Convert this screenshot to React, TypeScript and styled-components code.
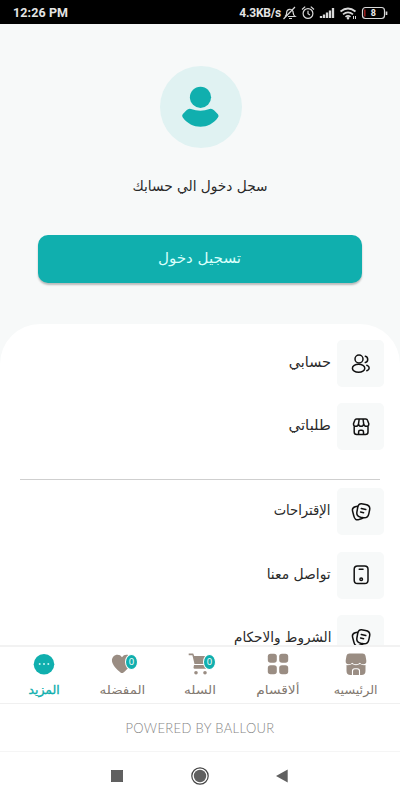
import React from "react";
import styled, { createGlobalStyle } from "styled-components";

const TEAL = "#10afae";
const TAUPE = "#9a8d83";

const GlobalStyle = createGlobalStyle`
  * { box-sizing: border-box; }
  body { margin: 0; background: #fff; }
`;

const Screen = styled.div`
  width: 400px;
  height: 800px;
  display: flex;
  flex-direction: column;
  overflow: hidden;
  background: #f7f9f9;
  font-family: "DejaVu Sans", "Noto Sans", sans-serif;
`;

const StatusBar = styled.header`
  flex: none;
  height: 24px;
  padding: 1px 12px 0 13px;
  display: flex;
  align-items: center;
  justify-content: space-between;
  background: #000;
  color: #e4e4e4;
  font: 700 12.5px/24px Roboto, sans-serif;
  letter-spacing: 0.1px;
`;

const StatusGroup = styled.div`
  display: flex;
  align-items: center;
  height: 24px;
`;

const Speed = styled.span`
  font-size: 12px;
  letter-spacing: -0.2px;
  margin-right: 1px;
`;

const StatusIcons = styled.svg`
  display: block;
  width: 106px;
  height: 16px;
`;

const Hero = styled.section`
  flex: none;
  height: 300px;
  padding: 42px 38px 0;
  display: flex;
  flex-direction: column;
  align-items: center;
`;

const Avatar = styled.div`
  width: 82px;
  height: 82px;
  margin-left: 1px;
  border-radius: 50%;
  background: #e0f2f2;
  display: flex;
  align-items: center;
  justify-content: center;
`;

const Label = styled.span<{ $size: number; $scale?: number; $origin?: string; $color?: string; $strong?: boolean }>`
  display: block;
  white-space: nowrap;
  direction: rtl;
  font-size: ${(p) => p.$size}px;
  line-height: 20px;
  color: ${(p) => p.$color ?? "#2a2a2a"};
  -webkit-text-stroke: ${(p) => (p.$strong ? "0.35px currentColor" : "0")};
  transform: scaleX(${(p) => p.$scale ?? 1});
  transform-origin: ${(p) => p.$origin ?? "center"};
`;

const Prompt = styled.div`
  margin-top: 28px;
  height: 20px;
`;

const LoginButton = styled.button`
  width: 324px;
  height: 48px;
  margin-top: 39px;
  padding: 0 2px 3px 0;
  border: 0;
  border-radius: 10px;
  background: ${TEAL};
  box-shadow: 0 2px 2px rgba(0, 0, 0, 0.25);
  display: flex;
  align-items: center;
  justify-content: center;
  font-family: inherit;
`;

const Sheet = styled.main`
  flex: 1;
  min-height: 0;
  overflow: hidden;
  padding: 16px 16px 0 20px;
  border-radius: 40px 40px 0 0;
  background: #fff;
`;

const MenuGroup = styled.div`
  display: flex;
  flex-direction: column;
  gap: 16.3px;
`;

const MenuRow = styled.div`
  direction: rtl;
  display: flex;
  align-items: center;
  gap: 6px;
  height: 47px;
`;

const MenuText = styled.div`
  padding-bottom: 3px;
`;

const Tile = styled.div`
  flex: none;
  width: 47px;
  height: 47px;
  border-radius: 5px;
  background: #f7f9f9;
  display: flex;
  align-items: center;
  justify-content: center;
`;

const Divider = styled.hr`
  width: 360px;
  height: 1px;
  margin: 28.7px 0 8.3px;
  border: 0;
  background: #cfcfcf;
`;

const TabBar = styled.nav`
  flex: none;
  height: 59px;
  padding: 0 5px;
  border-top: 2px solid #f2f2f2;
  border-bottom: 1px solid #f0f0f0;
  background: #fff;
  display: grid;
  grid-template-columns: repeat(5, 78px);
`;

const Tab = styled.div`
  display: flex;
  flex-direction: column;
  align-items: center;
  padding-top: 4px;
`;

const TabIcon = styled.div`
  position: relative;
  height: 26px;
  display: flex;
  align-items: center;
`;

const Badge = styled.span<{ $left: number }>`
  position: absolute;
  top: 3px;
  left: ${(p) => p.$left}px;
  width: 13px;
  height: 16px;
  border: 1px solid #fff;
  border-radius: 50%;
  background: ${TEAL};
  color: #fff;
  font: 9.5px/14px "Open Sans", sans-serif;
  text-align: center;
`;

const TabText = styled.div`
  height: 20px;
  margin-top: 3px;
`;

const Powered = styled.footer`
  flex: none;
  height: 48px;
  border-bottom: 1px solid #f5f5f5;
  background: #fff;
  color: #858585;
  text-align: center;
  font: 300 13px/48px Lato, sans-serif;
  letter-spacing: 0.35px;
`;

const SystemNav = styled.div`
  flex: none;
  height: 48px;
  background: #fff;
  display: flex;
  align-items: center;
  justify-content: space-between;
  padding: 0 112px 0 111px;
`;

const Line = styled.svg`
  display: block;
  fill: none;
  stroke: #111;
  stroke-width: 1.5;
  stroke-linecap: round;
  stroke-linejoin: round;
`;

const Solid = styled.svg<{ $fill?: string }>`
  display: block;
  fill: ${(p) => p.$fill ?? TAUPE};
`;

const PeopleIcon = () => (
  <Line width="20" height="20" viewBox="0 0 20 20">
    <circle cx="8" cy="5" r="4" />
    <ellipse cx="7.6" cy="14.300" rx="6.200" ry="4" />
    <path d="M14.300 2.300a3.200 3.200 0 0 1 0 6.200M15.800 11.300c3.200 1.200 3.200 4.200 0 5.500" />
  </Line>
);

const StoreIcon = () => (
  <Line width="20" height="20" viewBox="0 0 20 20">
    <path d="M3.200 9.400v5.600q0 2.500 2.500 2.500h8.800q2.500 0 2.500-2.500V9.400M5.500 2h9.300q1.300 0 1.700 1.200l1.300 3.500q.1 2.600-2.300 2.600t-2.800-2.500q-.3 2.500-2.600 2.500T7.500 6.800Q7.200 9.300 4.800 9.300T2.500 6.700l1.300-3.500Q4.200 2 5.500 2ZM8.200 2l-.7 4.800M12 2l.7 4.800M7.600 17.500v-2.500q0-1.700 1.700-1.700h1.500q1.700 0 1.700 1.700v2.500" />
  </Line>
);

const NotesIcon = () => (
  <Line width="20" height="20" viewBox="0 0 20 20">
    <path d="M10.500 1.700l4 .7C18 3 19.200 4.500 18.700 7.500l-.9 4.300c-.7 3.300-2.300 4.200-5.300 3.900l-2.800-.5C6.500 14.500 5.400 12.800 5.900 10l.8-4.500C7.300 2.500 8.200 1.500 10.500 1.700Z" />
    <path d="M6.500 4.200l-2.300.6C1.800 5.500 1 6.800 1.600 9.200l1.300 5c.7 3 2.300 4.100 5 3.300l2.400-.8q1.200-.4 1.700-1M10.300 6.500l4.500 1M9.600 10l3 .7" />
  </Line>
);

const PhoneIcon = () => (
  <Line width="20" height="20" viewBox="0 0 20 20">
    <rect x="3.200" y="1" width="13.800" height="17.600" rx="3.300" />
    <path d="M8.200 4.200h3.800" />
    <circle cx="10.200" cy="14.300" r="1.300" />
  </Line>
);

const HomeTabIcon = () => (
  <Solid width="22" height="23" viewBox="0 0 22 23">
    <path d="M4.500 .5h13q2.500 0 3 2.300L21.300 7.500q.4 3.800-2.800 3.800-2.400 0-3.700-1.600-1.500 1.600-3.800 1.600t-3.800-1.600q-1.300 1.600-3.700 1.600Q.300 11.300.7 7.500L1.500 2.800Q2 .500 4.500 .5Z" />
    <path d="M1.500 12.100q3.300.4 5.500-1 4 2.200 8 0 2.200 1.400 5.500 1v6q0 4-4 4h-11q-4 0-4-4Z" />
    <path d="M7.500 22.400v-4.300q0-2.300 2.300-2.300h2.400q2.300 0 2.300 2.300v4.300" fill="none" stroke="#fff" strokeWidth="1.100" />
  </Solid>
);

const GridIcon = () => (
  <Solid width="22" height="22" viewBox="0 0 22 22">
    <rect x=".8" y=".8" width="9" height="9" rx="2.800" />
    <rect x="12.200" y=".8" width="9" height="9" rx="2.800" />
    <rect x=".8" y="12.300" width="9" height="9" rx="2.800" />
    <rect x="12.200" y="12.300" width="9" height="9" rx="2.800" />
  </Solid>
);

const CartIcon = () => (
  <Solid width="24" height="24" viewBox="0 0 24 24">
    <path d="M.7 1.500h4.500L6.200 4H21l-1.500 8H6.500L4.400 3.200H.7ZM6 13h13.500l-.8 3.700H6.700q-1.200 0-1.200-1.200Z" />
    <circle cx="8" cy="20.800" r="1.800" />
    <circle cx="17" cy="20.800" r="1.800" />
  </Solid>
);

const HeartIcon = () => (
  <Solid width="22" height="20" viewBox="0 0 22 20">
    <path d="M11 3.300C13-.300 17.500.200 19.500 2.400c2.700 3 1.500 7.500-1.300 10.500-1.800 2-4.200 4.300-5.700 5.500q-1.500 1-3 0C7.700 17 5.500 15 3.800 12.900 1 9.600-.300 5.500 2.400 2.400 4.500.200 9 -.300 11 3.300Z" />
  </Solid>
);

const MoreIcon = () => (
  <Solid width="22" height="22" viewBox="0 0 22 22" $fill={TEAL}>
    <circle cx="11" cy="11.300" r="10.300" />
    <g fill="#c9f5f2">
      <circle cx="6.700" cy="11" r="1" />
      <circle cx="11" cy="11" r="1" />
      <circle cx="15.300" cy="11" r="1" />
    </g>
  </Solid>
);

interface MenuItem {
  text: string;
  scale: number;
  icon: React.ReactNode;
}

interface TabItem extends MenuItem {
  active?: boolean;
  badge?: { count: number; left: number };
}

const accountItems: MenuItem[] = [
  { text: "حسابي", scale: 1.03, icon: <PeopleIcon /> },
  { text: "طلباتي", scale: 1.06, icon: <StoreIcon /> },
];

const infoItems: MenuItem[] = [
  { text: "الإقتراحات", scale: 0.94, icon: <NotesIcon /> },
  { text: "تواصل معنا", scale: 0.99, icon: <PhoneIcon /> },
  { text: "الشروط والاحكام", scale: 0.97, icon: <NotesIcon /> },
];

const tabs: TabItem[] = [
  { text: "المزيد", scale: 1.03, icon: <MoreIcon />, active: true },
  { text: "المفضله", scale: 1.12, icon: <HeartIcon />, badge: { count: 0, left: 14 } },
  { text: "السله", scale: 1.14, icon: <CartIcon />, badge: { count: 0, left: 15 } },
  { text: "ألاقسام", scale: 1.15, icon: <GridIcon /> },
  { text: "الرئيسيه", scale: 1.06, icon: <HomeTabIcon /> },
];

const Menu = ({ items }: { items: MenuItem[] }) => (
  <MenuGroup>
    {items.map((item) => (
      <MenuRow key={item.text}>
        <Tile>{item.icon}</Tile>
        <MenuText>
          <Label $size={14} $scale={item.scale} $origin="right">{item.text}</Label>
        </MenuText>
      </MenuRow>
    ))}
  </MenuGroup>
);

export default function App() {
  return (
    <Screen>
      <GlobalStyle />
      <StatusBar>
        <span>12:26 PM</span>
        <StatusGroup>
          <Speed>4.3KB/s</Speed>
          <StatusIcons viewBox="0 0 106 16" fill="none" stroke="#d8d8d8" strokeWidth="1.2">
            <path d="M3 11.500c2-1.500 1.500-3 1.700-4.500C5 4 10 3 11 6.500c.3 2 0 3.500 2 5H6M7 13.500h3M1.500 14 13 2" />
            <circle cx="26" cy="8.500" r="4.900" />
            <path d="M26 5.700v3l2 1.300M20 4.500l3.200-2.900M32 4.500l-3.200-2.900" />
            <path d="M39 13v-2M42 13V9.500M45 13V7.500M48 13V5.500M51 13V3" strokeWidth="2.300" />
            <path d="M58.500 6.500q7.500-6 15 0M61 9.300q5-4 10 0M63.500 11.800q2.500-2 5 0" strokeWidth="1.700" />
            <circle cx="66" cy="13.200" r=".7" fill="#d8d8d8" />
            <path d="M71.500 11v3M73.500 11v3" strokeWidth="1" />
            <rect x="80.500" y="2.500" width="22" height="11" rx="3" />
            <path d="M104.500 6.500v3.500" strokeWidth="1.700" />
            <path d="M82.800 4.500v7" stroke="#a02020" strokeWidth="1.500" />
            <text x="91.500" y="11.300" textAnchor="middle" fill="#eee" stroke="none" fontSize="9">8</text>
          </StatusIcons>
        </StatusGroup>
      </StatusBar>

      <Hero>
        <Avatar>
          <Solid width="38" height="42" viewBox="0 0 38 42" $fill={TEAL}>
            <circle cx="18.500" cy="11.300" r="10.600" />
            <path d="M9 23q9.500 3.600 18.500 0 2.500-.8 4.500 1.300l3.700 3.800q1.500 1.700.2 3.400C27.500 43.800 9.500 43.800.800 31.500Q-.5 29.800.900 28.100L4.500 24.300q2-2.100 4.500-1.300Z" />
          </Solid>
        </Avatar>
        <Prompt>
          <Label $size={14} $scale={0.98}>سجل دخول الي حسابك</Label>
        </Prompt>
        <LoginButton>
          <Label $size={14} $scale={1.08} $color="#d9fffb">تسجيل دخول</Label>
        </LoginButton>
      </Hero>

      <Sheet>
        <Menu items={accountItems} />
        <Divider />
        <Menu items={infoItems} />
      </Sheet>

      <TabBar>
        {tabs.map((tab) => (
          <Tab key={tab.text}>
            <TabIcon>
              {tab.icon}
              {tab.badge && <Badge $left={tab.badge.left}>{tab.badge.count}</Badge>}
            </TabIcon>
            <TabText>
              <Label $size={12} $scale={tab.scale} $color={tab.active ? TEAL : "#82786f"} $strong={tab.active}>
                {tab.text}
              </Label>
            </TabText>
          </Tab>
        ))}
      </TabBar>

      <Powered>POWERED BY BALLOUR</Powered>

      <SystemNav>
        <Solid width="12" height="12" viewBox="0 0 12 12" $fill="#606060">
          <rect x=".3" y=".3" width="11.400" height="11.400" stroke="#444" strokeWidth=".6" />
        </Solid>
        <Solid width="18" height="18" viewBox="0 0 18 18" $fill="#606060">
          <circle cx="9" cy="9" r="6.200" />
          <circle cx="9" cy="9" r="8.200" fill="none" stroke="#444" strokeWidth="1.200" />
        </Solid>
        <Solid width="12" height="14" viewBox="0 0 12 14" $fill="#606060">
          <path d="M0 7 11.700.500v13Z" />
        </Solid>
      </SystemNav>
    </Screen>
  );
}
